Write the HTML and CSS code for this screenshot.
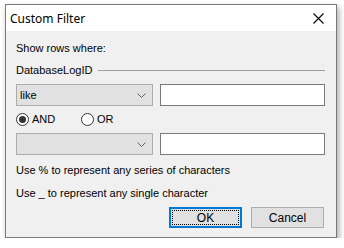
FILE: index.html
```html
<!DOCTYPE html>
<html lang="en">
<head>
  <meta charset="UTF-8">
  <title>Custom Filter</title>
  <link rel="stylesheet" href="styles.css">
</head>
<body>
  <div class="dialog">
    <div class="titlebar">
      <span class="title">Custom Filter</span>
      <svg class="close" width="11" height="11" viewBox="0 0 11 11">
        <path d="M0.5 0.5 L10.5 10.5 M10.5 0.5 L0.5 10.5" stroke="#000" stroke-width="1.1" fill="none"/>
      </svg>
    </div>
    <div class="content">
      <div class="label first">Show rows where:</div>
      <div class="field-head">
        <span>DatabaseLogID</span>
        <div class="rule"></div>
      </div>
      <div class="row cond">
        <div class="combo">
          <span>like</span>
          <svg class="arrow" width="9" height="5" viewBox="0 0 9 5">
            <path d="M0.5 0.5 L4.5 4.5 L8.5 0.5" stroke="#606060" fill="none"/>
          </svg>
        </div>
        <div class="textbox"></div>
      </div>
      <div class="row radios">
        <label class="radio"><span class="dot checked"></span>AND</label>
        <label class="radio"><span class="dot"></span>OR</label>
      </div>
      <div class="row cond">
        <div class="combo">
          <span></span>
          <svg class="arrow" width="9" height="5" viewBox="0 0 9 5">
            <path d="M0.5 0.5 L4.5 4.5 L8.5 0.5" stroke="#606060" fill="none"/>
          </svg>
        </div>
        <div class="textbox"></div>
      </div>
      <div class="label hint">Use % to represent any series of characters</div>
      <div class="label hint">Use _ to represent any single character</div>
      <div class="buttons">
        <div class="btn default"><span>OK</span></div>
        <div class="btn">Cancel</div>
      </div>
    </div>
  </div>
</body>
</html>
```

FILE: styles.css
```css
* {
  box-sizing: border-box;
}
body {
  margin: 0;
  background: #fff;
  font-family: 'Liberation Sans', Arial, sans-serif;
  font-size: 11px;
  color: #000;
}
.dialog {
  margin: 4px 0 0 5px;
  width: 332px;
  height: 234px;
  border: 1px solid #7a7a7a;
  background: #f0f0f0;
  box-shadow: 2px 3px 6px rgba(0, 0, 0, 0.35);
  display: flex;
  flex-direction: column;
}
.titlebar {
  height: 26px;
  background: #fff;
  display: flex;
  align-items: center;
  justify-content: space-between;
  padding: 0 12px 0 4px;
}
.title {
  font-family: 'Noto Sans', sans-serif;
  font-size: 12px;
}
.content {
  padding: 0 11px 0 10px;
  display: flex;
  flex-direction: column;
}
.label {
  line-height: 14px;
}
.first {
  margin-top: 10px;
}
.field-head {
  margin-top: 8px;
  display: flex;
  align-items: center;
  line-height: 14px;
}
.rule {
  flex: 1;
  height: 1px;
  background: #a0a0a0;
  margin-left: 6px;
}
.row {
  display: flex;
}
.cond {
  height: 22px;
  gap: 7px;
}
.field-head + .cond {
  margin-top: 7px;
}
.combo {
  width: 137px;
  background: #e1e1e1;
  border: 1px solid #adadad;
  display: flex;
  align-items: center;
  justify-content: space-between;
  padding: 0 6px 0 3px;
}
.textbox {
  flex: 1;
  background: #fff;
  border: 1px solid #7a7a7a;
}
.radios {
  margin: 6px 0 7px;
  height: 14px;
  align-items: center;
}
.radio {
  display: flex;
  align-items: center;
  width: 65px;
}
.dot {
  width: 13px;
  height: 13px;
  border: 1px solid #333;
  border-radius: 50%;
  background: #fff;
  margin-right: 3px;
  display: flex;
  align-items: center;
  justify-content: center;
}
.dot.checked::after {
  content: "";
  width: 7px;
  height: 7px;
  border-radius: 50%;
  background: #333;
}
.hint {
  margin-top: 9px;
}
.cond + .hint {
  margin-top: 8px;
}
.buttons {
  margin: 7px 1px 0 0;
  display: flex;
  justify-content: flex-end;
  gap: 9px;
}
.btn {
  width: 73px;
  height: 21px;
  background: #e1e1e1;
  border: 1px solid #adadad;
  display: flex;
  align-items: center;
  justify-content: center;
  font-size: 12px;
}
.btn.default {
  border: 2px solid #0078d7;
  padding: 1px;
}
.btn.default span {
  flex: 1;
  align-self: stretch;
  border: 1px dotted #000;
  display: flex;
  align-items: center;
  justify-content: center;
}
```
